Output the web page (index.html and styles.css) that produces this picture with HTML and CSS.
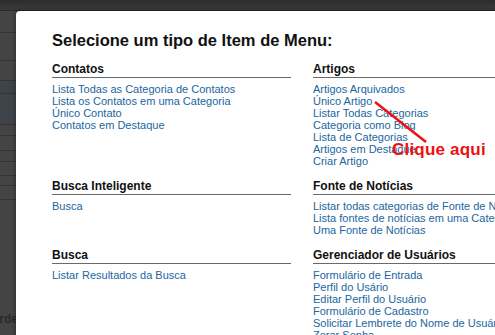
FILE: index.html
```html
<!DOCTYPE html>
<html lang="pt">
<head>
    <meta charset="UTF-8">
    <meta name="viewport" content="width=device-width, initial-scale=1.0">
    <title>Selecione um tipo de Item de Menu</title>
    <link rel="stylesheet" href="styles.css">
</head>
<body>
    <!-- página de administração escurecida atrás do modal -->
    <div class="page">
        <div class="page-toolbar"></div>
        <div class="page-row h23"></div>
        <div class="page-row h28"></div>
        <div class="page-row h20"></div>
        <div class="page-row h13 selected"></div>
        <div class="page-row h31 selected"></div>
        <div class="page-row h11"></div>
        <div class="page-row h15"></div>
        <div class="page-row h11"></div>
        <div class="page-row h14"></div>
        <div class="page-row h10"></div>
        <div class="page-row h14"></div>
        <div class="page-footer"><span class="page-label">Ordem</span></div>
    </div>

    <div class="modal">
        <h2 class="modal-title">Selecione um tipo de Item de Menu:</h2>

        <div class="menu-types">
            <div class="menu-group">
                <h3>Contatos</h3>
                <ul>
                    <li><a href="#">Lista Todas as Categoria de Contatos</a></li>
                    <li><a href="#">Lista os Contatos em uma Categoria</a></li>
                    <li><a href="#">Único Contato</a></li>
                    <li><a href="#">Contatos em Destaque</a></li>
                </ul>
            </div>
            <div class="menu-group">
                <h3>Artigos</h3>
                <ul>
                    <li><a href="#">Artigos Arquivados</a></li>
                    <li><a href="#">Único Artigo</a></li>
                    <li><a href="#">Listar Todas Categorias</a></li>
                    <li><a href="#">Categoria como Blog</a></li>
                    <li><a href="#">Lista de Categorias</a></li>
                    <li><a href="#">Artigos em Destaque</a></li>
                    <li><a href="#">Criar Artigo</a></li>
                </ul>
            </div>

            <div class="menu-group">
                <h3>Busca Inteligente</h3>
                <ul>
                    <li><a href="#">Busca</a></li>
                </ul>
            </div>
            <div class="menu-group">
                <h3>Fonte de Notícias</h3>
                <ul>
                    <li><a href="#">Listar todas categorias de Fonte de Notícias</a></li>
                    <li><a href="#">Lista fontes de notícias em uma Categoria</a></li>
                    <li><a href="#">Uma Fonte de Notícias</a></li>
                </ul>
            </div>

            <div class="menu-group">
                <h3>Busca</h3>
                <ul>
                    <li><a href="#">Listar Resultados da Busca</a></li>
                </ul>
            </div>
            <div class="menu-group">
                <h3>Gerenciador de Usuários</h3>
                <ul>
                    <li><a href="#">Formulário de Entrada</a></li>
                    <li><a href="#">Perfil do Usário</a></li>
                    <li><a href="#">Editar Perfil do Usuário</a></li>
                    <li><a href="#">Formulário de Cadastro</a></li>
                    <li><a href="#">Solicitar Lembrete do Nome de Usuário</a></li>
                    <li><a href="#">Zerar Senha</a></li>
                </ul>
            </div>
        </div>
    </div>

    <!-- anotação em vermelho -->
    <svg class="hint-line" width="60" height="50" viewBox="0 0 60 50">
        <line x1="2" y1="2" x2="53" y2="42" stroke="#ee1111" stroke-width="2.5"/>
    </svg>
    <div class="hint-text">Clique aqui</div>
</body>
</html>
```

FILE: styles.css
```css
* {
    margin: 0;
    padding: 0;
    box-sizing: border-box;
}

html, body {
    width: 100%;
    height: 100%;
    overflow: hidden;
}

body {
    position: relative;
    background-color: #434343;
    font-family: 'Liberation Sans', Arial, sans-serif;
}

/* página por trás */
.page {
    display: flex;
    flex-direction: column;
    height: 100%;
}

.page-toolbar {
    height: 11px;
    background: linear-gradient(#2c2c2c, #3a3a3a);
    border-bottom: 1px solid #282828;
}

.page-row {
    background-color: #444444;
    border-bottom: 1px solid #343434;
}

.page-row.selected {
    background-color: #3e434a;
}

.h10 { height: 10px; }
.h11 { height: 11px; }
.h13 { height: 13px; }
.h14 { height: 14px; }
.h15 { height: 15px; }
.h20 { height: 20px; }
.h23 { height: 22px; }
.h28 { height: 28px; }
.h31 { height: 31px; }

.page-footer {
    flex: 1;
    background-color: #444444;
    padding-top: 112px;
}

.page-label {
    display: block;
    margin-left: -10px;
    font-size: 12px;
    font-weight: bold;
    color: #2a2a2a;
}

/* modal */
.modal {
    position: absolute;
    top: 11px;
    left: 16px;
    width: 620px;
    height: 400px;
    background-color: #fff;
    border-radius: 4px 0 0 0;
    box-shadow: 0 0 4px rgba(0,0,0,0.4);
    padding: 19px 36px;
}

.modal-title {
    font-size: 16.5px;
    line-height: 20px;
    font-weight: bold;
    color: #111;
    margin-bottom: 12px;
}

.menu-types {
    display: grid;
    grid-template-columns: 239px 239px;
    column-gap: 22px;
    row-gap: 12px;
}

.menu-group h3 {
    font-size: 12px;
    line-height: 15px;
    font-weight: bold;
    color: #111;
    border-bottom: 1px solid #6a6a6a;
    white-space: nowrap;
}

.menu-group ul {
    list-style: none;
    margin-top: 5px;
    font-size: 11px;
    line-height: 12px;
    white-space: nowrap;
}

.menu-group a {
    color: #2166a0;
    text-decoration: none;
}

/* anotação */
.hint-line {
    position: absolute;
    top: 100px;
    left: 373px;
}

.hint-text {
    position: absolute;
    top: 141px;
    left: 392px;
    font-size: 17px;
    line-height: 18px;
    font-weight: bold;
    letter-spacing: 0.2px;
    color: #ee1111;
}
```
